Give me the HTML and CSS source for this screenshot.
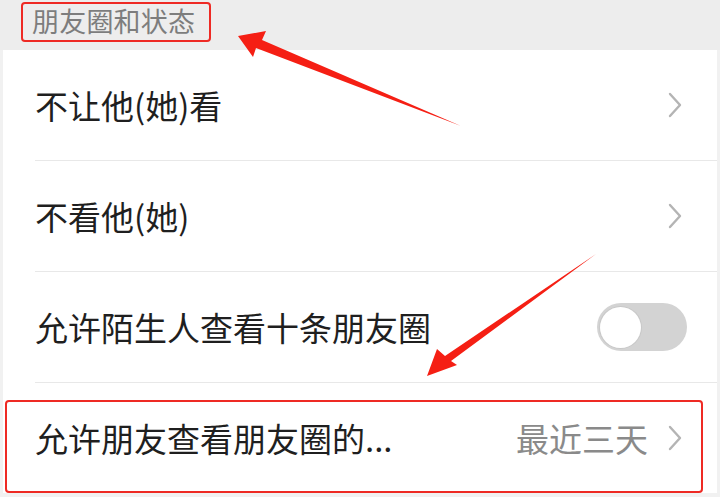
FILE: index.html
```html
<!DOCTYPE html>
<html lang="zh-CN">
<head>
<meta charset="utf-8">
<link rel="stylesheet" href="styles.css">
</head>
<body>
<div class="page">
  <div class="section-head"><span class="section-title">朋友圈和状态</span></div>
  <div class="list">
    <div class="row">
      <div class="row-body">
        <span class="label">不让他(她)看</span>
        <svg class="chev" viewBox="0 0 14 26" width="14" height="26"><path d="M2 2 L12 13 L2 24" fill="none" stroke="#b4b4b4" stroke-width="2.4" stroke-linecap="round" stroke-linejoin="round"/></svg>
      </div>
    </div>
    <div class="row">
      <div class="row-body">
        <span class="label">不看他(她)</span>
        <svg class="chev" viewBox="0 0 14 26" width="14" height="26"><path d="M2 2 L12 13 L2 24" fill="none" stroke="#b4b4b4" stroke-width="2.4" stroke-linecap="round" stroke-linejoin="round"/></svg>
      </div>
    </div>
    <div class="row">
      <div class="row-body toggle-row">
        <span class="label">允许陌生人查看十条朋友圈</span>
        <span class="switch"><span class="knob"></span></span>
      </div>
    </div>
    <div class="row last">
      <div class="row-body">
        <span class="label">允许朋友查看朋友圈的...</span>
        <span class="value">最近三天</span>
        <svg class="chev" viewBox="0 0 14 26" width="14" height="26"><path d="M2 2 L12 13 L2 24" fill="none" stroke="#b4b4b4" stroke-width="2.4" stroke-linecap="round" stroke-linejoin="round"/></svg>
      </div>
    </div>
  </div>
  <div class="mark-box"></div>
  <svg class="arrows" viewBox="0 0 720 497" width="720" height="497">
    <polygon points="238,36 266,31 262,40 461,126 256,48 253,57" fill="#f51f14"/>
    <polygon points="427,376 437,349 445,356 596,254 451,361 457,365" fill="#f51f14"/>
  </svg>
</div>
</body>
</html>
```
FILE: styles.css
```css
html, body {
  margin: 0;
  padding: 0;
}
body {
  background: #f1f1f1;
  font-family: "Noto Sans CJK SC", "Noto Sans", sans-serif;
  width: 720px;
  height: 497px;
  overflow: hidden;
}
.page {
  position: relative;
  width: 720px;
  height: 497px;
}
.section-head {
  height: 50px;
  background: #ededed;
  padding-left: 21px;
  box-sizing: border-box;
  padding-top: 2px;
}
.section-title {
  display: inline-block;
  box-sizing: border-box;
  height: 40px;
  line-height: 34px;
  padding: 0 14px 0 9px;
  border: 2px solid #ee2a24;
  border-radius: 4px;
  font-size: 27px;
  color: #7d7d7d;
  letter-spacing: 0.2px;
}
.list {
  background: #ffffff;
  margin: 0 3px;
}
.row {
  padding-left: 32px;
}
.row-body {
  height: 110px;
  border-bottom: 1px solid #e8e8e8;
  display: flex;
  align-items: center;
  padding-right: 35px;
}
.row.last .row-body {
  border-bottom: none;
}
.label {
  flex: 1;
  font-size: 33px;
  color: #1f1f1f;
  white-space: nowrap;
}
.value {
  font-size: 33px;
  color: #8a8a8a;
  margin-right: 20px;
}
.chev {
  display: block;
  flex: none;
}
.toggle-row {
  padding-right: 30px;
}
.switch {
  width: 90px;
  height: 48px;
  border-radius: 24px;
  background: #d3d3d3;
  display: flex;
  align-items: center;
  padding-left: 3px;
  box-sizing: border-box;
}
.knob {
  width: 41px;
  height: 41px;
  border-radius: 50%;
  background: #ffffff;
  box-shadow: 0 0 0 1px #c8c8c8;
}
.mark-box {
  position: absolute;
  left: 5px;
  top: 400px;
  width: 698px;
  height: 93px;
  box-sizing: border-box;
  border: 2px solid #ee2a24;
  border-radius: 4px;
}
.arrows {
  position: absolute;
  left: 0;
  top: 0;
  pointer-events: none;
}
```
